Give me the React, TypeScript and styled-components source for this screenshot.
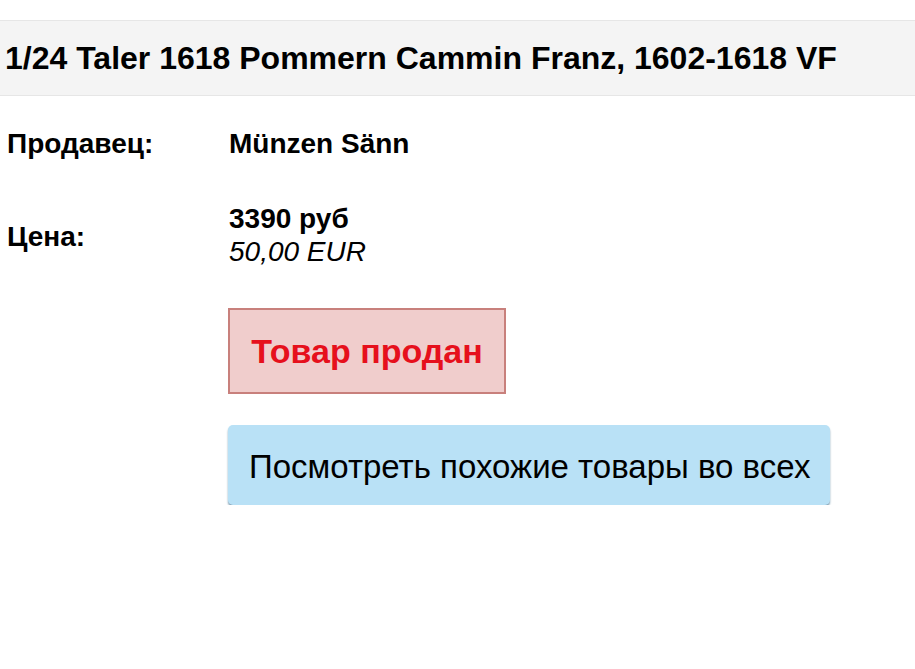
import React from "react";
import styled, { createGlobalStyle } from "styled-components";

const GlobalStyle = createGlobalStyle`
  html, body {
    margin: 0;
    padding: 0;
    background: #ffffff;
    font-family: "Liberation Sans", Arial, sans-serif;
    color: #000000;
  }
`;

const Page = styled.div`
  padding-top: 20px;
  width: 915px;
`;

const TitleBar = styled.div`
  background: #f4f4f4;
  border-top: 1px solid #e6e6e6;
  border-bottom: 1px solid #e6e6e6;
  height: 74px;
  display: flex;
  align-items: center;
  padding-left: 5px;
`;

const Title = styled.h1`
  margin: 0;
  font-size: 32px;
  font-weight: 700;
`;

const Details = styled.div`
  display: grid;
  grid-template-columns: 222px 1fr;
  padding-left: 7px;
  font-size: 28px;
`;

const Label = styled.div<{ $top: number }>`
  font-weight: 700;
  line-height: 32px;
  padding-top: ${(p) => p.$top}px;
`;

const Value = styled.div<{ $top: number }>`
  padding-top: ${(p) => p.$top}px;
`;

const Seller = styled.div`
  font-weight: 700;
  line-height: 32px;
`;

const PriceMain = styled.div`
  font-weight: 700;
  line-height: 33px;
`;

const PriceAlt = styled.div`
  font-style: italic;
  line-height: 33px;
`;

const Actions = styled.div`
  padding: 40px 0 0 228px;
  display: flex;
  flex-direction: column;
  align-items: flex-start;
  gap: 31px;
`;

const SoldBox = styled.div`
  width: 278px;
  height: 86px;
  box-sizing: border-box;
  background: #f0cdcc;
  border: 2px solid #c8807c;
  color: #e6101c;
  font-size: 34px;
  font-weight: 700;
  display: flex;
  align-items: center;
  justify-content: center;
`;

const SimilarButton = styled.button`
  width: 602px;
  height: 80px;
  box-sizing: border-box;
  border: none;
  border-radius: 5px;
  background: #b9e1f6;
  box-shadow: 0 2px 2px #7f9fb3;
  font-family: "Liberation Sans", Arial, sans-serif;
  font-size: 33px;
  color: #000000;
  text-align: left;
  padding: 4px 0 0 21px;
  white-space: nowrap;
  overflow: hidden;
`;

export default function App() {
  return (
    <Page>
      <GlobalStyle />
      <TitleBar>
        <Title>1/24 Taler 1618 Pommern Cammin Franz, 1602-1618 VF</Title>
      </TitleBar>
      <Details>
        <Label $top={32}>Продавец:</Label>
        <Value $top={32}>
          <Seller>Münzen Sänn</Seller>
        </Value>
        <Label $top={61}>Цена:</Label>
        <Value $top={42}>
          <PriceMain>3390 руб</PriceMain>
          <PriceAlt>50,00 EUR</PriceAlt>
        </Value>
      </Details>
      <Actions>
        <SoldBox>Товар продан</SoldBox>
        <SimilarButton>Посмотреть похожие товары во всех</SimilarButton>
      </Actions>
    </Page>
  );
}
